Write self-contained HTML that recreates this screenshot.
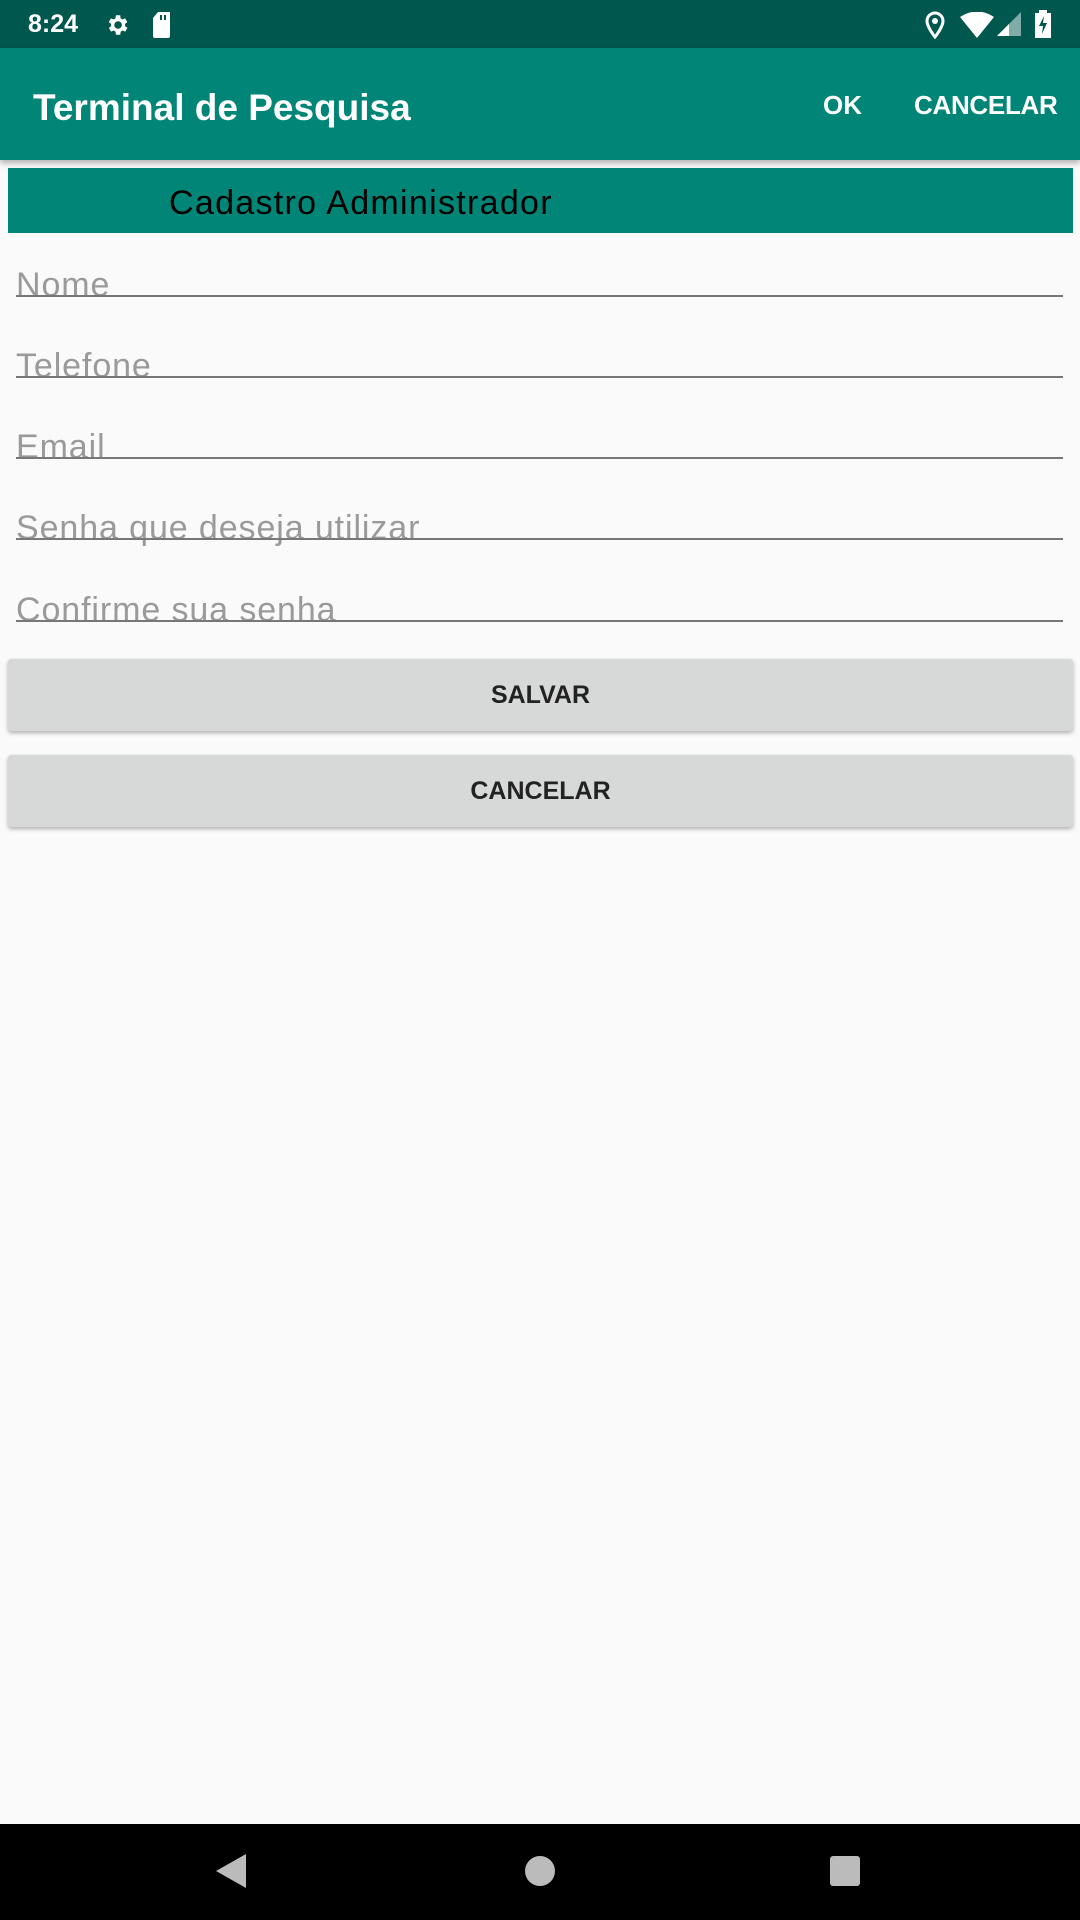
<!DOCTYPE html>
<html><head><meta charset="utf-8"><style>
*{margin:0;padding:0;box-sizing:border-box}
body{width:1080px;height:1920px;background:#fafafa;font-family:"Liberation Sans",sans-serif;position:relative;overflow:hidden}
.abs{position:absolute}
.status{left:0;top:0;width:1080px;height:48px;background:#00574d}
.bar{left:0;top:48px;width:1080px;height:112px;background:#008577;box-shadow:0 3px 6px rgba(0,0,0,.3)}
.hdr{left:8px;top:168px;width:1065px;height:65px;background:#008577}
.hint{left:16px;font-size:34px;letter-spacing:0.9px;color:#9a9a9a}
.line{left:16px;width:1047px;height:2px;background:#777}
.btn{left:8px;width:1065px;height:72px;background:#d7d8d8;box-shadow:0 2px 4px rgba(0,0,0,.3);border-radius:3px;font-weight:bold;font-size:25px;color:#222;text-align:center;line-height:72px}
.nav{left:0;top:1824px;width:1080px;height:96px;background:#000}
</style></head><body>
<div class="abs status">
<div class="abs" style="left:28px;top:10px;color:#fff;font-size:25px;font-weight:bold">8:24</div>
<svg class="abs" style="left:104px;top:12px" width="26" height="26" viewBox="0 0 24 24"><path fill="#fff" d="M19.4 13a7.5 7.5 0 000-2l2.1-1.6-2-3.5-2.5 1a7 7 0 00-1.7-1L15 3h-4l-.4 2.9a7 7 0 00-1.7 1l-2.5-1-2 3.5L6.6 11a7.5 7.5 0 000 2l-2.1 1.6 2 3.5 2.5-1a7 7 0 001.7 1L11 21h4l.4-2.9a7 7 0 001.7-1l2.5 1 2-3.5zM13 15.5a3.5 3.5 0 110-7 3.5 3.5 0 010 7z"/></svg>
<svg class="abs" style="left:152px;top:12px" width="20" height="26" viewBox="0 0 20 26"><path fill="#fff" d="M6 0h12v24a2 2 0 01-2 2H3a2 2 0 01-2-2V6z"/><path fill="#00574d" d="M8 3h2v5H8zM12 3h2v5h-2z"/></svg>
<svg class="abs" style="left:924px;top:11px" width="22" height="28" viewBox="0 0 22 28"><path fill="none" stroke="#fff" stroke-width="3" d="M11 26S3 16 3 10a8 8 0 0116 0c0 6-8 16-8 16z"/><circle cx="11" cy="10" r="3" fill="#fff"/></svg>
<svg class="abs" style="left:960px;top:12px" width="34" height="26" viewBox="0 0 34 26"><path fill="#fff" d="M0 5Q17-6 34 5L17 26z"/></svg>
<svg class="abs" style="left:997px;top:12px" width="24" height="24" viewBox="0 0 24 24"><path fill="#fff" d="M24 0v24H0z" opacity=".5"/><path fill="#fff" d="M12 12v12H0z"/></svg>
<svg class="abs" style="left:1035px;top:10px" width="16" height="28" viewBox="0 0 16 28"><path fill="#fff" d="M4 0h8v3h4v25H0V3h4z"/><path fill="#00574d" d="M9 6L4 16h4l-1 8 5-11H8z"/></svg>
</div>
<div class="abs bar">
<div class="abs" style="left:33px;top:39px;color:#fff;font-size:37px;font-weight:bold">Terminal de Pesquisa</div>
<div class="abs" style="left:823px;top:42px;color:#fff;font-size:26px;font-weight:bold">OK</div>
<div class="abs" style="left:914px;top:42px;color:#fff;font-size:26px;font-weight:bold;letter-spacing:-0.3px">CANCELAR</div>
</div>
<div class="abs hdr"><div class="abs" style="left:161px;top:16px;font-size:34px;letter-spacing:1.3px;color:#000">Cadastro Administrador</div></div>
<div class="abs hint" style="top:266px">Nome</div><div class="abs line" style="top:295px"></div>
<div class="abs hint" style="top:347px">Telefone</div><div class="abs line" style="top:376px"></div>
<div class="abs hint" style="top:428px">Email</div><div class="abs line" style="top:457px"></div>
<div class="abs hint" style="top:509px">Senha que deseja utilizar</div><div class="abs line" style="top:538px"></div>
<div class="abs hint" style="top:591px">Confirme sua senha</div><div class="abs line" style="top:620px"></div>
<div class="abs btn" style="top:659px">SALVAR</div>
<div class="abs btn" style="top:755px">CANCELAR</div>
<div class="abs nav">
<svg class="abs" style="left:216px;top:30px" width="32" height="34" viewBox="0 0 32 34"><path fill="#bbb" d="M30 0v34L0 17z"/></svg>
<div class="abs" style="left:525px;top:32px;width:30px;height:30px;border-radius:50%;background:#bbb"></div>
<div class="abs" style="left:830px;top:32px;width:30px;height:30px;border-radius:3px;background:#bbb"></div>
</div>
</body></html>
